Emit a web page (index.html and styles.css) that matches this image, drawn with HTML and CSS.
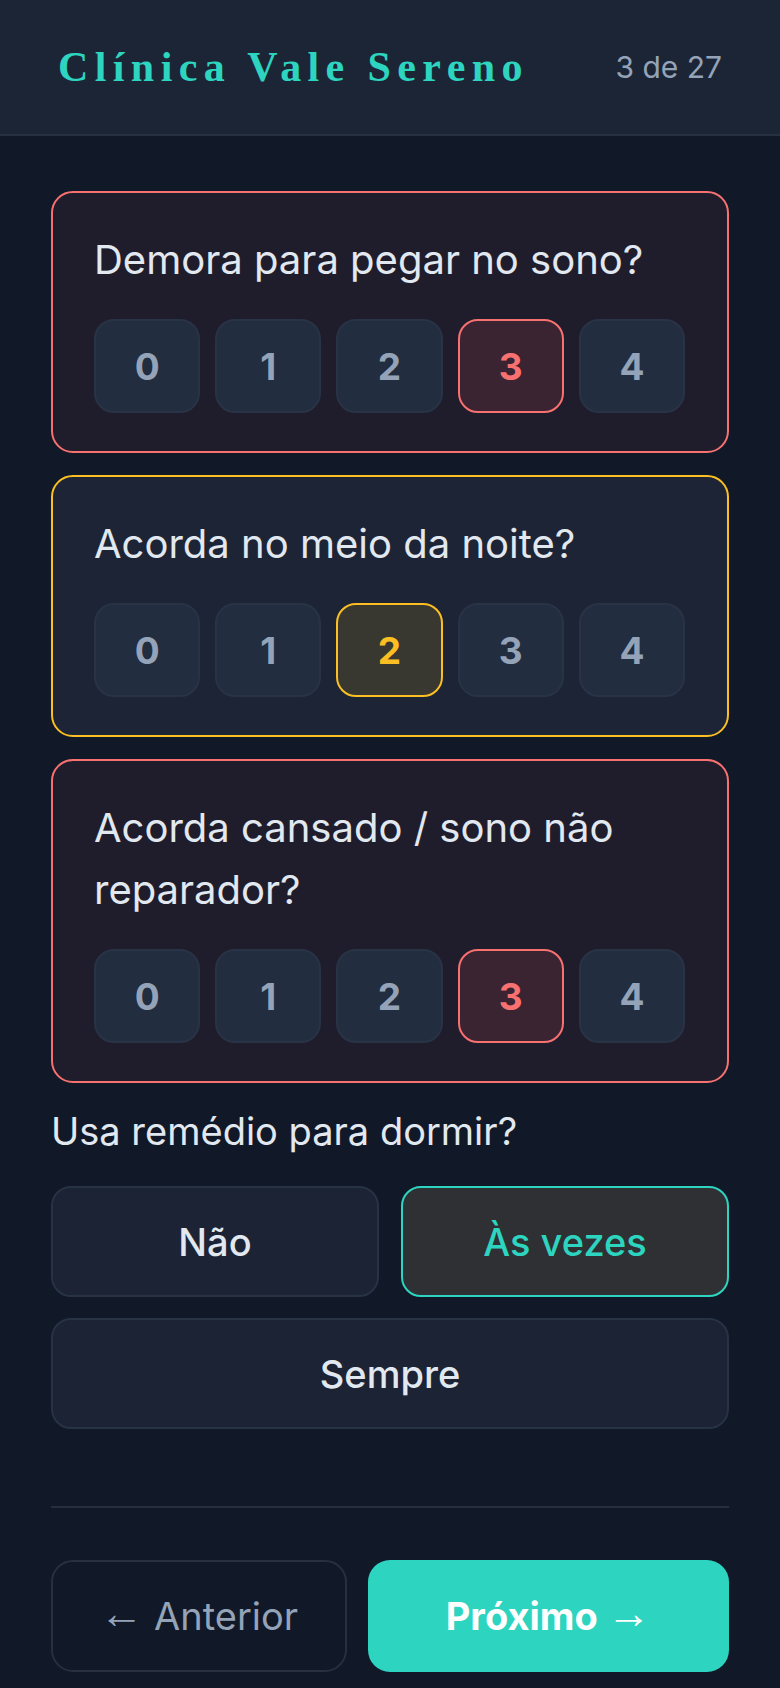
FILE: index.html
```html
<!DOCTYPE html>
<html lang="pt-BR">
<head>
  <meta charset="UTF-8">
  <meta name="viewport" content="width=device-width, initial-scale=1.0">
  <title>Questionário do sono - Clínica Vale Sereno</title>
  <link rel="stylesheet" href="styles.css">
</head>
<body>
  <header class="top-bar">
    <h1 class="clinic-name">Clínica Vale Sereno</h1>
    <span class="progress">3 de 27</span>
  </header>

  <main class="form">
    <div class="question-card level-high">
      <p class="question-text">Demora para pegar no sono?</p>
      <div class="scale">
        <button class="scale-btn">0</button>
        <button class="scale-btn">1</button>
        <button class="scale-btn">2</button>
        <button class="scale-btn selected">3</button>
        <button class="scale-btn">4</button>
      </div>
    </div>

    <div class="question-card level-mid">
      <p class="question-text">Acorda no meio da noite?</p>
      <div class="scale">
        <button class="scale-btn">0</button>
        <button class="scale-btn">1</button>
        <button class="scale-btn selected">2</button>
        <button class="scale-btn">3</button>
        <button class="scale-btn">4</button>
      </div>
    </div>

    <div class="question-card level-high">
      <p class="question-text">Acorda cansado / sono não reparador?</p>
      <div class="scale">
        <button class="scale-btn">0</button>
        <button class="scale-btn">1</button>
        <button class="scale-btn">2</button>
        <button class="scale-btn selected">3</button>
        <button class="scale-btn">4</button>
      </div>
    </div>

    <p class="field-label">Usa remédio para dormir?</p>
    <div class="choices">
      <button class="choice">Não</button>
      <button class="choice active">Às vezes</button>
      <button class="choice wide">Sempre</button>
    </div>
  </main>

  <footer class="nav-bar">
    <button class="nav-btn prev"><span class="arrow">←</span> Anterior</button>
    <button class="nav-btn next">Próximo <span class="arrow">→</span></button>
  </footer>
</body>
</html>
```

FILE: styles.css
```css
:root {
  --bg: #111827;
  --panel: #1c2536;
  --line: #263041;
  --text: #e2e8f0;
  --muted: #94a3b8;
  --teal: #2dd4bf;
  --red: #f87171;
  --yellow: #fbbf24;
}

* {
  box-sizing: border-box;
}

body {
  margin: 0;
  background-color: var(--bg);
  color: var(--text);
  font-family: 'Inter', 'Liberation Sans', sans-serif;
}

button {
  font-family: inherit;
  cursor: pointer;
}

.top-bar {
  height: 136px;
  padding: 0 58px;
  background-color: var(--panel);
  border-bottom: 2px solid var(--line);
  display: flex;
  align-items: center;
  justify-content: space-between;
}

.clinic-name {
  margin: 0;
  font-family: 'Liberation Serif', serif;
  font-weight: bold;
  font-size: 42px;
  letter-spacing: 6.4px;
  color: var(--teal);
}

.progress {
  font-size: 30px;
  color: var(--muted);
}

.form {
  padding: 55px 51px 0;
}

.question-card {
  background-color: #1c2435;
  border: 2px solid var(--line);
  border-radius: 22px;
  padding: 36px 42px 38px 41px;
  margin-bottom: 22px;
}

.question-card.level-high {
  background-color: #1f1d2b;
  border-color: var(--red);
}

.question-card.level-mid {
  border-color: var(--yellow);
}

.question-text {
  margin: 0 0 28px;
  font-size: 40px;
  line-height: 62px;
  color: var(--text);
}

.scale {
  display: flex;
  gap: 15px;
}

.scale-btn {
  flex: 1;
  height: 94px;
  background-color: #222d40;
  border: 2px solid #283346;
  border-radius: 20px;
  color: var(--muted);
  font-size: 37px;
  font-weight: 700;
}

.level-high .scale-btn.selected {
  background-color: #3a2431;
  border-color: var(--red);
  color: var(--red);
}

.level-mid .scale-btn.selected {
  background-color: #393830;
  border-color: var(--yellow);
  color: var(--yellow);
}

.field-label {
  margin: 0 0 29px;
  font-size: 38px;
  line-height: 52px;
}

.choices {
  display: grid;
  grid-template-columns: 1fr 1fr;
  gap: 21px 22px;
}

.choice {
  height: 111px;
  background-color: #1b2334;
  border: 2px solid #273244;
  border-radius: 20px;
  color: var(--text);
  font-size: 38px;
  font-weight: 500;
}

.choice.wide {
  grid-column: 1 / -1;
}

.choice.active {
  background-color: #2f3033;
  border-color: var(--teal);
  color: var(--teal);
}

.nav-bar {
  margin: 77px 51px 0;
  padding: 52px 0 16px;
  border-top: 2px solid #252f40;
  display: flex;
  gap: 21px;
}

.nav-btn {
  height: 112px;
  border-radius: 22px;
  font-size: 38px;
}

.nav-btn .arrow {
  font-family: 'Liberation Sans', sans-serif;
  font-size: 44px;
  line-height: 0;
  vertical-align: 2px;
}

.nav-btn.prev {
  flex: 1;
  background: transparent;
  border: 2px solid var(--line);
  color: var(--muted);
}

.nav-btn.next {
  flex: 1.25;
  background-color: var(--teal);
  border: none;
  color: #fff;
  font-weight: 700;
}
```
